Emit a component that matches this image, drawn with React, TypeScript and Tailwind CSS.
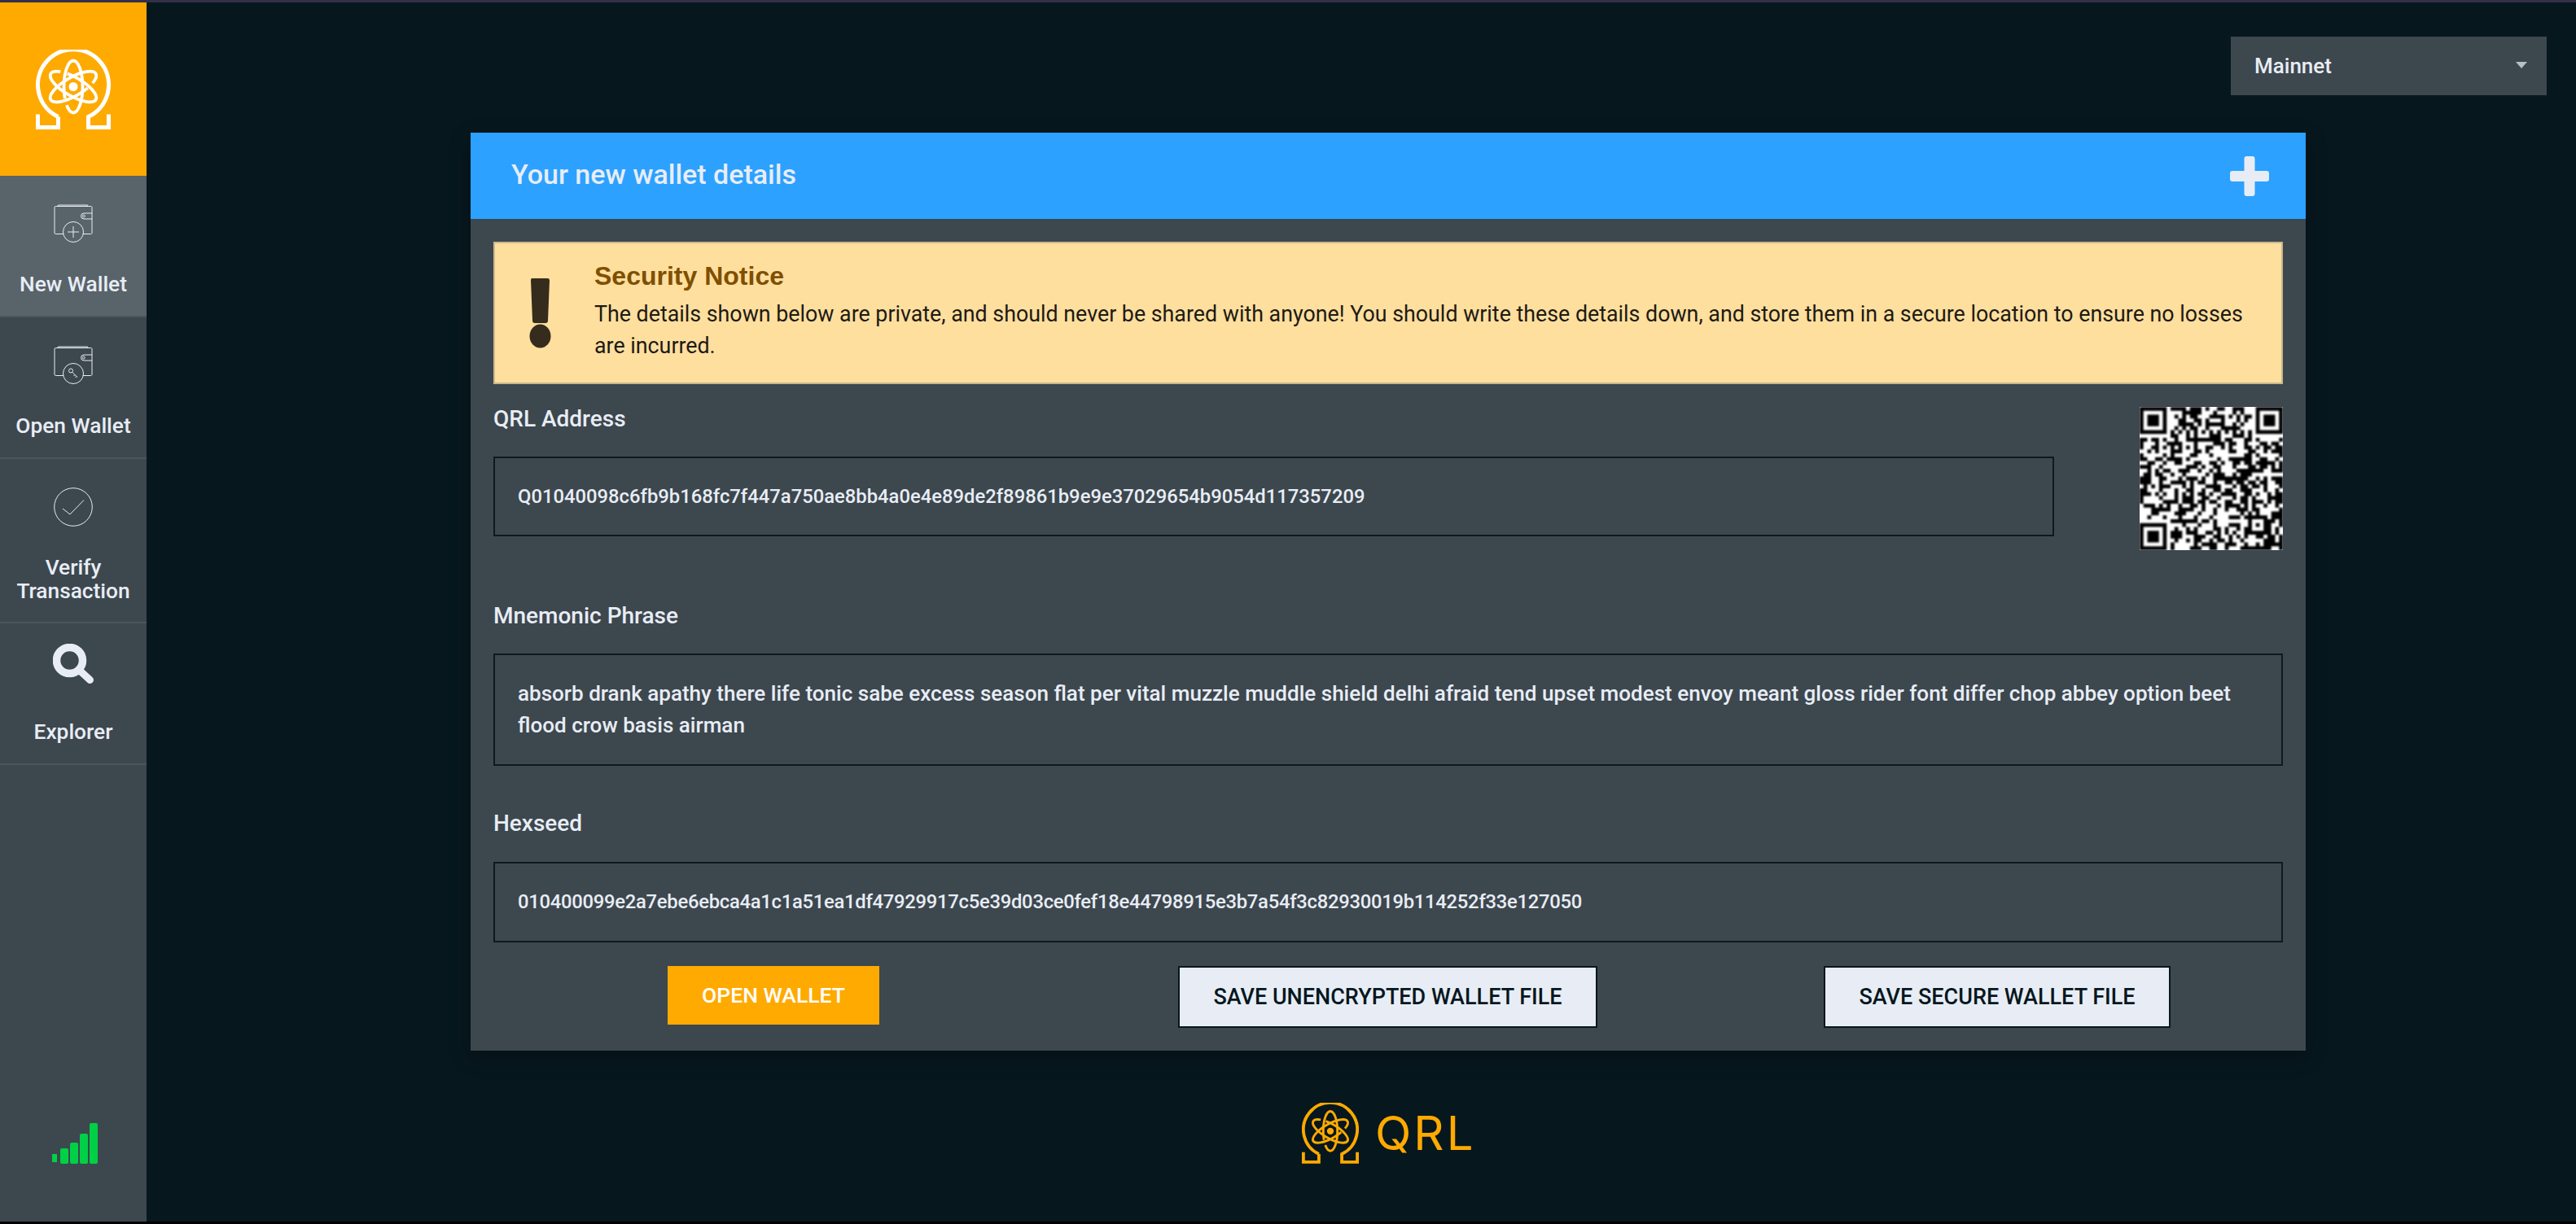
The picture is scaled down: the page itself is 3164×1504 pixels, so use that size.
import React from 'react';

const QR_TEXT = 'Q01040098c6fb9b168fc7f447a750ae8bb4a0e4e89de2f89861b9e9e37029654b9054d117357209';
const QR_MASK = 6;
const bodyFont = "font-['Roboto',sans-serif]";

// small QR encoder: version 5-L, byte mode, which is what the address fits in
function gfMul(a: number, b: number) {
  let r = 0;
  for (let i = 7; i >= 0; i--) {
    r = (r << 1) ^ ((r >>> 7) * 0x11d);
    r ^= ((b >>> i) & 1) * a;
  }
  return r & 255;
}

function reedSolomon(data: number[], degree: number) {
  const gen = new Array(degree).fill(0);
  gen[degree - 1] = 1;
  let root = 1;
  for (let i = 0; i < degree; i++) {
    for (let j = 0; j < degree; j++) {
      gen[j] = gfMul(gen[j], root);
      if (j + 1 < degree) gen[j] ^= gen[j + 1];
    }
    root = gfMul(root, 2);
  }
  const res = new Array(degree).fill(0);
  for (const b of data) {
    const factor = b ^ res.shift();
    res.push(0);
    gen.forEach((g, i) => (res[i] ^= gfMul(g, factor)));
  }
  return res as number[];
}

function buildQr(text: string, mask: number) {
  const size = 37;
  const dataBits = 864;
  const bits: number[] = [];
  const put = (v: number, n: number) => {
    for (let i = n - 1; i >= 0; i--) bits.push((v >>> i) & 1);
  };
  put(4, 4);
  put(text.length, 8);
  for (const c of text) put(c.charCodeAt(0), 8);
  put(0, Math.min(4, dataBits - bits.length));
  while (bits.length % 8) bits.push(0);
  for (let p = 0xec; bits.length < dataBits; p ^= 0xec ^ 0x11) put(p, 8);
  const bytes: number[] = [];
  for (let i = 0; i < bits.length; i += 8) bytes.push(parseInt(bits.slice(i, i + 8).join(''), 2));
  const stream = [...bytes, ...reedSolomon(bytes, 26)];

  const grid: boolean[][] = Array.from({ length: size }, () => new Array(size).fill(false));
  const fixed: boolean[][] = Array.from({ length: size }, () => new Array(size).fill(false));
  const set = (x: number, y: number, v: boolean) => {
    if (x < 0 || y < 0 || x >= size || y >= size) return;
    grid[y][x] = v;
    fixed[y][x] = true;
  };
  for (const [cx, cy] of [[3, 3], [33, 3], [3, 33]]) {
    for (let dy = -4; dy <= 4; dy++)
      for (let dx = -4; dx <= 4; dx++) {
        const d = Math.max(Math.abs(dx), Math.abs(dy));
        set(cx + dx, cy + dy, d !== 2 && d !== 4);
      }
  }
  for (let dy = -2; dy <= 2; dy++)
    for (let dx = -2; dx <= 2; dx++) set(30 + dx, 30 + dy, Math.max(Math.abs(dx), Math.abs(dy)) !== 1);
  for (let i = 8; i < size - 8; i++) {
    set(i, 6, i % 2 === 0);
    set(6, i, i % 2 === 0);
  }

  // format info
  const fmt = (1 << 3) | mask;
  let rem = fmt;
  for (let i = 0; i < 10; i++) rem = (rem << 1) ^ ((rem >>> 9) * 0x537);
  const f = ((fmt << 10) | rem) ^ 0x5412;
  const bit = (i: number) => ((f >>> i) & 1) === 1;
  for (let i = 0; i <= 5; i++) set(8, i, bit(i));
  set(8, 7, bit(6));
  set(8, 8, bit(7));
  set(7, 8, bit(8));
  for (let i = 9; i < 15; i++) set(14 - i, 8, bit(i));
  for (let i = 0; i < 8; i++) set(size - 1 - i, 8, bit(i));
  for (let i = 8; i < 15; i++) set(8, size - 15 + i, bit(i));
  set(8, size - 8, true);

  let idx = 0;
  for (let right = size - 1; right >= 1; right -= 2) {
    if (right === 6) right = 5;
    for (let vert = 0; vert < size; vert++) {
      for (let j = 0; j < 2; j++) {
        const x = right - j;
        const y = ((right + 1) & 2) === 0 ? size - 1 - vert : vert;
        if (!fixed[y][x] && idx < stream.length * 8) {
          const on = ((stream[idx >>> 3] >>> (7 - (idx & 7))) & 1) === 1;
          const flip = (((x * y) % 2) + ((x * y) % 3)) % 2 === 0;
          grid[y][x] = on !== flip;
          idx++;
        }
      }
    }
  }
  return grid;
}

function QrCode() {
  const m = buildQr(QR_TEXT, QR_MASK);
  let d = '';
  m.forEach((row, y) => row.forEach((v, x) => { if (v) d += `M${x} ${y}h1v1h-1z`; }));
  return (
    <div className="h-[176px] w-[176px] overflow-hidden bg-white">
      <svg viewBox="0 0 37 37" className="h-[176px] w-[176px] blur-[0.8px]">
        <path d={d} fill="#000" />
      </svg>
    </div>
  );
}

function QrlLogo({ className, color }: { className: string; color: string }) {
  return (
    <svg viewBox="0 0 92 98" className={className} fill="none" stroke={color}>
      <path d="M27.500 82.500A43.500 43.500 0 1 1 64.500 82.500V95.500H89.500V79.500M27.500 82.500V95.500H2.500V79.500" strokeWidth="5" />
      <g strokeWidth="3.800">
        <ellipse cx="46" cy="45.500" rx="32" ry="11.500" pathLength="100" strokeDasharray="9 6 85 0" transform="rotate(90 46 45.500)" />
        <ellipse cx="46" cy="45.500" rx="32" ry="11.500" pathLength="100" strokeDasharray="9 6 85 0" transform="rotate(210 46 45.500)" />
        <ellipse cx="46" cy="45.500" rx="32" ry="11.500" pathLength="100" strokeDasharray="9 6 85 0" transform="rotate(330 46 45.500)" />
      </g>
      <circle cx="46" cy="45.500" r="5.500" fill={color} stroke="none" />
    </svg>
  );
}

function WalletIcon({ badge }: { badge: 'plus' | 'key' }) {
  return (
    <svg viewBox="0 0 48 47" className="h-[47px] w-[48px]" fill="none" stroke="#e8edf5" strokeWidth="1">
      <path d="M5 2.500 L5.500 1H41.500L42 2.500" />
      <path d="M12 36.500H2.500A1.500 1.500 0 0 1 1 35V4A1.500 1.500 0 0 1 2.500 2.500H45A1.500 1.500 0 0 1 47 4V35A1.500 1.500 0 0 1 45 36.500H36" />
      <path d="M47 11H37a3.500 3.500 0 0 0 0 7H47" />
      <circle cx="36.800" cy="14.500" r="1.500" />
      <circle cx="24" cy="34" r="12.500" />
      {badge === 'plus' ? (
        <path d="M24 27V41M17 34H31" />
      ) : (
        <>
          <circle cx="21" cy="30.500" r="2.500" />
          <path d="M22.800 32.300L29 38.500M26 35.500L24.500 37M28 37.500L26.500 39" />
        </>
      )}
    </svg>
  );
}

function CheckIcon() {
  return (
    <svg viewBox="0 0 48 48" className="h-[48px] w-[48px]" fill="none" stroke="#e8edf5" strokeWidth="1">
      <circle cx="24" cy="24" r="23.300" />
      <path d="M11 26L20 33L37 15.500" />
    </svg>
  );
}

function SearchIcon() {
  return (
    <svg viewBox="0 0 50 50" className="h-[50px] w-[50px] -translate-y-[9px]" fill="none" stroke="#e8edf5">
      <circle cx="20.500" cy="20.500" r="16" strokeWidth="9.500" />
      <path d="M33 33L45.500 44.500" strokeWidth="9" strokeLinecap="round" />
    </svg>
  );
}

const navItems = [
  { label: ['New Wallet'], icon: <WalletIcon badge="plus" />, active: true, h: 'h-[174px]' },
  { label: ['Open Wallet'], icon: <WalletIcon badge="key" />, active: false, h: 'h-[174px]' },
  { label: ['Verify', 'Transaction'], icon: <CheckIcon />, active: false, h: 'h-[202px]' },
  { label: ['Explorer'], icon: <SearchIcon />, active: false, h: 'h-[174px]' },
];

function Sidebar() {
  return (
    <div className="flex w-[180px] shrink-0 flex-col bg-[#3d474e]">
      <div className="flex h-[213px] items-center justify-center bg-[#ffaa00]">
        <QrlLogo className="h-[98px] w-[92px]" color="#ffffff" />
      </div>
      {navItems.map((item) => (
        <div
          key={item.label[0]}
          className={`${item.h} flex flex-col items-center border-b-2 border-[#4b565c] pt-[35px] ${item.active ? 'bg-[#59636a]' : ''}`}
        >
          <div className="flex h-[47px] items-center justify-center">{item.icon}</div>
          <div className="mt-[37px] text-center text-[26.3px] leading-[29px] font-medium text-[#e8edf5]">
            {item.label.map((l) => (
              <div key={l}>{l}</div>
            ))}
          </div>
        </div>
      ))}
      <div className="mt-auto flex h-[121px] items-start pl-[64px]">
        <div className="flex h-[50px] items-end gap-[2px]">
          <div className="mb-[2px] h-[10px] w-[6px] bg-[#00d045]" />
          <div className="ml-[2px] h-[19px] w-[10px] rounded-[2px] bg-[#00d045]" />
          <div className="h-[26px] w-[10px] rounded-[2px] bg-[#00d045]" />
          <div className="h-[37px] w-[10px] rounded-[2px] bg-[#00d045]" />
          <div className="h-[50px] w-[10px] rounded-[2px] bg-[#00d045]" />
        </div>
      </div>
    </div>
  );
}

function Label({ children }: { children: React.ReactNode }) {
  return <div className="h-[39px] text-[28px] leading-[39px] font-medium text-[#e8edf5]">{children}</div>;
}

function ValueBox({ children, className }: { children: React.ReactNode; className: string }) {
  return (
    <div className={`${className} border-2 border-[#0b1a22] px-[28px] leading-[39px] font-medium text-[#e8edf5]`}>
      {children}
    </div>
  );
}

export default function App() {
  return (
    <div className={`${bodyFont} flex h-[1504px] w-[3164px] flex-col overflow-hidden bg-[#07171e]`}>
      <div className="h-[3px] shrink-0 bg-[#33304a]" />
      <div className="flex h-[1498px]">
        <Sidebar />
        <main className="flex-1">
          <div className="mt-[42px] ml-[2560px] flex h-[72px] w-[388px] items-center justify-between bg-[#3d474e] pr-[24px] pl-[29px] text-[26px] font-medium text-[#e8edf5]">
            <span>Mainnet</span>
            <span className="mb-[2px] h-0 w-0 border-x-[7px] border-t-[8px] border-x-transparent border-t-[#b9bfc9]" />
          </div>
          <div className="mt-[46px] ml-[398px] h-[1128px] w-[2254px] bg-[#3d474e] shadow-[0_8px_24px_rgba(0,0,0,0.25)]">
            <div className="flex h-[106px] items-center justify-between bg-[#2ca1ff] pr-[45px] pl-[50px]">
              <h1 className="pb-[3px] text-[34px] font-medium text-[#e8edf5]">Your new wallet details</h1>
              <svg viewBox="0 0 48 49" className="h-[49px] w-[48px]" fill="#e8edf5">
                <rect x="17.500" y="0" width="13" height="49" rx="3" />
                <rect x="0" y="18" width="48" height="13" rx="3" />
              </svg>
            </div>
            <div className="px-[28px] pt-[28px]">
              <div className="flex h-[175px] border-2 border-[#c9b98d] bg-[#ffdf9e]">
                <svg viewBox="0 0 28 86" className="mt-[43px] ml-[42px] h-[86px] w-[28px]" fill="#362c1d">
                  <path d="M3 0H23Q25 0 25 2.500L23 52Q23 55 20 55H7Q4 55 4 52L2 2.500Q2 0 3 0Z" />
                  <ellipse cx="13.500" cy="71" rx="13" ry="14.500" />
                </svg>
                <div className="ml-[52px] flex-1 pt-[22px] pr-[16px]">
                  <div className="font-['Liberation_Sans',sans-serif] text-[32px] leading-[36px] font-bold text-[#7f4f00]">Security Notice</div>
                  <div className="mt-[10px] text-[26.8px] leading-[39px] text-[#1d1a14]">
                    The details shown below are private, and should never be shared with anyone! You should write these details down, and store them in a secure location to ensure no losses are incurred.
                  </div>
                </div>
              </div>

              <div className="flex items-start justify-between">
                <div className="w-[1917px] pt-[23px]">
                  <Label>QRL Address</Label>
                  <ValueBox className="mt-[27px] flex h-[98px] items-center text-[23.8px]">{QR_TEXT}</ValueBox>
                </div>
                <div className="pt-[28px]">
                  <QrCode />
                </div>
              </div>

              <div className="mt-[61px]">
                <Label>Mnemonic Phrase</Label>
                <ValueBox className="mt-[27px] h-[138px] pt-[28px] text-[26.05px]">
                  absorb drank apathy there life tonic sabe excess season flat per vital muzzle muddle shield delhi afraid tend upset modest envoy meant gloss rider font differ chop abbey option beet flood crow basis airman
                </ValueBox>
              </div>

              <div className="mt-[51px]">
                <Label>Hexseed</Label>
                <ValueBox className="mt-[28px] flex h-[99px] items-center text-[23.8px] tracking-[-0.27px]">
                  010400099e2a7ebe6ebca4a1c1a51ea1df47929917c5e39d03ce0fef18e44798915e3b7a54f3c82930019b114252f33e127050
                </ValueBox>
              </div>

              <div className="mt-[29px] flex items-start text-[27px] font-medium">
                <button className="ml-[214px] h-[72px] w-[260px] bg-[#ffaa00] text-[26.500px] text-[#ffffff]">OPEN WALLET</button>
                <button className="ml-[367px] h-[76px] w-[515px] border-2 border-[#07171e] bg-[#e8edf5] text-[#07171e]">SAVE UNENCRYPTED WALLET FILE</button>
                <button className="ml-[278px] h-[76px] w-[426px] border-2 border-[#07171e] bg-[#e8edf5] text-[#07171e]">SAVE SECURE WALLET FILE</button>
              </div>
            </div>
          </div>
          <div className="mt-[64px] ml-[1419px] flex items-center">
            <QrlLogo className="h-[75px] w-[70px]" color="#ffaa00" />
            <span className="ml-[20px] font-['Inter',sans-serif] text-[58px] leading-[75px] tracking-[3px] text-[#ffaa00]">QRL</span>
          </div>
        </main>
      </div>
      <div className="h-[3px] shrink-0 bg-[#000000]" />
    </div>
  );
}
